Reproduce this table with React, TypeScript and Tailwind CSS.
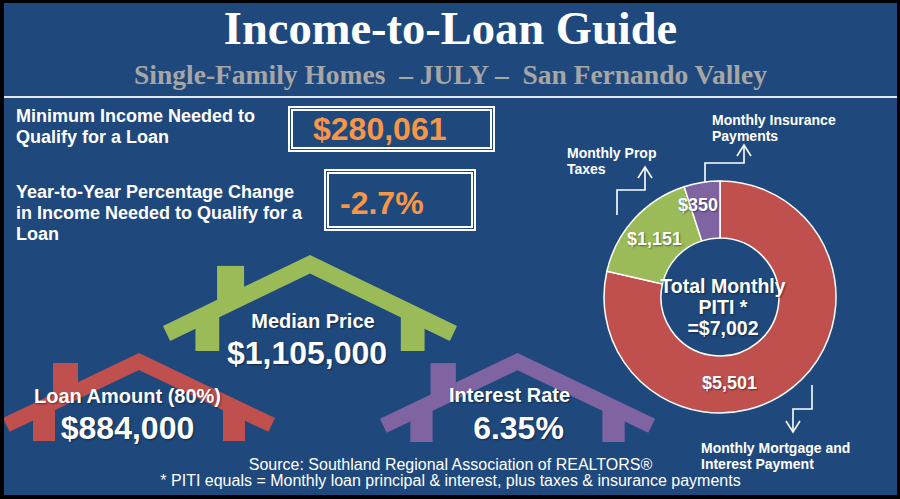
import React from "react";

const SANS = "font-['Liberation_Sans',Arial,sans-serif]";
const SERIF = "font-['Liberation_Serif','Times_New_Roman',serif]";
const SHADOW = "[text-shadow:1px_1px_2px_rgba(0,0,0,0.45)]";

// donut slice from angle a0 to a1 (degrees, 0 = 12 o'clock, clockwise)
function slice(cx: number, cy: number, R: number, r: number, a0: number, a1: number) {
  const pt = (rr: number, a: number) => {
    const t = ((a - 90) * Math.PI) / 180;
    return `${(cx + rr * Math.cos(t)).toFixed(2)} ${(cy + rr * Math.sin(t)).toFixed(2)}`;
  };
  const large = a1 - a0 > 180 ? 1 : 0;
  return `M${pt(R, a0)} A${R} ${R} 0 ${large} 1 ${pt(R, a1)} L${pt(r, a1)} A${r} ${r} 0 ${large} 0 ${pt(r, a0)} Z`;
}

// house outline: roof chevron, chimney and two wall stubs (272 x 88 units)
const HouseShape = ({ color }: { color: string }) => (
  <svg className="absolute inset-0 w-full h-full overflow-visible" viewBox="0 0 272 88" preserveAspectRatio="none">
    <g fill={color}>
      <polygon points="0,65 136,0 272,65 265.4,78.8 136,17 6.6,78.8" />
      <rect x="30" y="55" width="22" height="33" />
      <rect x="220" y="55" width="22" height="33" />
      <rect x="50" y="10" width="25" height="32" />
    </g>
  </svg>
);

const Donut = () => {
  const cx = 160;
  const cy = 199;
  const data = [
    { v: 5501, c: "#c0504d" },
    { v: 1151, c: "#9bbb59" },
    { v: 350, c: "#8064a2" },
  ];
  const total = data.reduce((s, d) => s + d.v, 0);
  let a = 0;
  return (
    <svg className="absolute left-0 top-0 overflow-visible" width="336" height="352">
      {data.map((d) => {
        const a0 = a;
        a += (d.v / total) * 360;
        return <path key={d.c} d={slice(cx, cy, 116, 59, a0, a)} fill={d.c} stroke="#ffffff" strokeWidth="1.5" />;
      })}
      <g fill="none" stroke="#ffffff" strokeWidth="1.6">
        <polyline points="57,117 57,92 85,92 85,70" />
        <polyline points="78,80 85,69 92,80" />
        <polyline points="145,84 145,65 184,65 184,48" />
        <polyline points="177,58 184,47 191,58" />
        <polyline points="252,287 252,311 233,311 233,333" />
        <polyline points="226,323 233,334 240,323" />
      </g>
    </svg>
  );
};

export default function App() {
  return (
    <div className={`w-[900px] h-[499px] bg-black pt-[3px] pl-[4px] pr-[3px] pb-[4px] ${SANS}`}>
      <div className="relative w-full h-full bg-[#1f497d] flex flex-col overflow-hidden">
        {/* header */}
        <h1 className={`${SERIF} mt-[3px] text-center text-white font-bold text-[46.5px] leading-none`}>
          Income-to-Loan Guide
        </h1>
        <h2 className={`${SERIF} mt-[8px] text-center text-[#a6a6a6] font-bold text-[27.5px] leading-none whitespace-pre`}>
          {"Single-Family Homes  – JULY –  San Fernando Valley"}
        </h2>
        <div className="mt-[8px] h-[2px] bg-[#e4eaf3]" />

        {/* body */}
        <div className="flex h-[352px]">
          <div className="w-[556px] shrink-0 pl-[12px] pt-[8px] flex flex-col">
            <div className="flex items-start gap-[12px]">
              <p className="w-[260px] text-white font-bold text-[18px] leading-[21px]">
                Minimum Income Needed to Qualify for a Loan
              </p>
              <div className="w-[207px] h-[46px] border-[5px] border-double border-white flex items-center pl-[20px]">
                <span className="text-[#f79646] font-bold text-[32px] leading-none">$280,061</span>
              </div>
            </div>

            <div className="mt-[17px] flex items-start gap-[14px]">
              <p className="mt-[13px] w-[294px] text-white font-bold text-[18px] leading-[21px]">
                Year-to-Year Percentage Change in Income Needed to Qualify for a Loan
              </p>
              <div className="w-[152px] h-[62px] border-[5px] border-double border-white pl-[11px] pt-[13px]">
                <span className="block text-[#f79646] font-bold text-[32px] leading-none">-2.7%</span>
              </div>
            </div>

            {/* houses: each placed on the infographic canvas */}
            <div className={`relative -ml-[12px] mt-[6px] w-[660px] h-[200px] text-white font-bold ${SHADOW}`}>
              <div className="absolute left-[159px] top-[4px] w-[294px] h-[96px] flex flex-col items-center pt-[56px]">
                <HouseShape color="#9bbb59" />
                <span className="relative ml-[6px] text-[20px] leading-none">Median Price</span>
                <span className="relative mt-[6px] -ml-[6px] text-[32px] leading-none">$1,105,000</span>
              </div>
              <div className="absolute -left-[1.5px] top-[102px] w-[272px] h-[88px] flex flex-col items-center pt-[33px] pr-[22px]">
                <HouseShape color="#c0504d" />
                <span className="relative text-[20px] leading-none">Loan Amount (80%)</span>
                <span className="relative mt-[6px] text-[32px] leading-none">$884,000</span>
              </div>
              <div className="absolute left-[376px] top-[102px] w-[275px] h-[89px] flex flex-col items-center pt-[32px]">
                <HouseShape color="#8064a2" />
                <span className="relative -ml-[16px] text-[20px] leading-none">Interest Rate</span>
                <span className="relative mt-[7px] ml-[2px] text-[32px] leading-none">6.35%</span>
              </div>
            </div>
          </div>

          {/* chart canvas */}
          <div className="relative flex-1 text-white font-bold">
            <Donut />
            <span className={`absolute left-[118px] top-[98px] text-[18px] leading-none ${SHADOW}`}>$350</span>
            <span className={`absolute left-[67px] top-[132px] text-[18px] leading-none ${SHADOW}`}>$1,151</span>
            <span className={`absolute left-[142px] top-[276px] text-[18px] leading-none ${SHADOW}`}>$5,501</span>
            <div className={`absolute left-[83px] top-[178px] w-[160px] flex flex-col items-center text-[19.5px] leading-[21px] ${SHADOW}`}>
              <span>Total Monthly</span>
              <span>PITI *</span>
              <span>=$7,002</span>
            </div>
            <p className="absolute left-[7px] top-[47px] text-[14px] leading-[16px]">
              Monthly Prop
              <br />
              Taxes
            </p>
            <p className="absolute left-[152px] top-[14px] text-[14px] leading-[16px]">
              Monthly Insurance
              <br />
              Payments
            </p>
            <p className="absolute left-[141px] top-[342px] text-[14px] leading-[16px] whitespace-nowrap">
              Monthly Mortgage and
              <br />
              Interest Payment
            </p>
          </div>
        </div>

        {/* footer */}
        <div className="pt-[7px] flex flex-col items-center text-white text-[16px] leading-[16px]">
          <p>Source: Southland Regional Association of REALTORS®</p>
          <p>* PITI equals = Monthly loan principal &amp; interest, plus taxes &amp; insurance payments</p>
        </div>
      </div>
    </div>
  );
}
